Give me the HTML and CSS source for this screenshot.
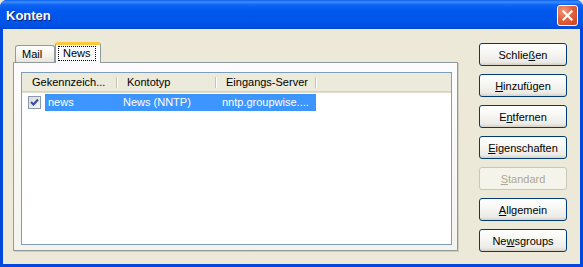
FILE: index.html
```html
<!DOCTYPE html>
<html lang="de">
<head>
  <meta charset="UTF-8" />
  <title>Konten</title>
  <link rel="stylesheet" href="styles.css">
</head>
<body>
  <div class="window">
    <!-- Title bar -->
    <div class="titlebar">
      <span class="title">Konten</span>
      <button class="close-btn">
        <svg width="11" height="11" viewBox="0 0 11 11">
          <path d="M1.5 1.5 L9.5 9.5 M9.5 1.5 L1.5 9.5" stroke="#fff" stroke-width="2.2" stroke-linecap="square"/>
        </svg>
      </button>
    </div>

    <div class="client">
      <!-- Left: tabs + list -->
      <div class="tab-area">
        <div class="tabs">
          <div class="tab">Mail</div>
          <div class="tab active"><span class="focus">News</span></div>
        </div>
        <div class="panel">
          <div class="listview">
            <div class="lv-header">
              <div class="col col-1">Gekennzeich...</div>
              <div class="col col-2">Kontotyp</div>
              <div class="col col-3">Eingangs-Server</div>
            </div>
            <div class="lv-row">
              <span class="check">
                <svg width="9" height="9" viewBox="0 0 9 9">
                  <path d="M1 4 L3.5 6.5 L8 1.5" fill="none" stroke="#3048a8" stroke-width="2"/>
                </svg>
              </span>
              <div class="selected">
                <span class="cell cell-1">news</span>
                <span class="cell cell-2">News (NNTP)</span>
                <span class="cell cell-3">nntp.groupwise....</span>
              </div>
            </div>
          </div>
        </div>
      </div>

      <!-- Right: buttons -->
      <div class="buttons">
        <button class="btn">Schlie<u>ß</u>en</button>
        <button class="btn"><u>H</u>inzufügen</button>
        <button class="btn">E<u>n</u>tfernen</button>
        <button class="btn"><u>E</u>igenschaften</button>
        <button class="btn" disabled><u>S</u>tandard</button>
        <button class="btn"><u>A</u>llgemein</button>
        <button class="btn">Ne<u>w</u>sgroups</button>
      </div>
    </div>
  </div>
</body>
</html>
```

FILE: styles.css
```css
/* ==========================
   PAGE & WINDOW
=========================== */
body {
  margin: 0;
  padding: 0;
  font-family: 'Liberation Sans', Arial, sans-serif;
  font-size: 11px;
  color: #000;
  background: #ECE9D8;
}

.window {
  width: 583px;
  height: 267px;
  display: flex;
  flex-direction: column;
  background: #0049DC;
  border-radius: 7px 7px 0 0;
  overflow: hidden;
  box-sizing: border-box;
}

/* ==========================
   TITLE BAR
=========================== */
.titlebar {
  height: 29px;
  flex: none;
  display: flex;
  align-items: center;
  justify-content: space-between;
  padding: 0 5px 0 6px;
  background: linear-gradient(#0A5FEA 0%, #3D8DFF 7%, #0F66F5 16%, #0058EE 35%, #0055EA 70%, #0052E3 90%, #0048D6 100%);
}

.title {
  color: #fff;
  font-weight: bold;
  font-size: 13px;
  font-family: 'Liberation Sans', Arial, sans-serif;
  text-shadow: 1px 1px 0 #0A1F77;
  margin-top: 1px;
}

.close-btn {
  width: 21px;
  height: 21px;
  padding: 0;
  border: 1px solid #fff;
  border-radius: 3px;
  background: radial-gradient(circle at 30% 25%, #EE9A7C 0%, #E2623F 45%, #C9431F 100%);
  display: flex;
  align-items: center;
  justify-content: center;
  margin-top: 2px;
}

/* ==========================
   CLIENT AREA
=========================== */
.client {
  flex: 1;
  margin: 0 3px 3px 3px;
  background: #ECE9D8;
  display: flex;
}

.tab-area {
  padding: 13px 0 0 10px;
  display: flex;
  flex-direction: column;
}

.tabs {
  display: flex;
  align-items: flex-end;
  padding-left: 2px;
  height: 20px;
  position: relative;
  z-index: 1;
}

.tab {
  height: 17px;
  box-sizing: border-box;
  padding: 2px 0 0 6px;
  width: 40px;
  border: 1px solid #919B9C;
  border-bottom: none;
  border-radius: 3px 3px 0 0;
  background: linear-gradient(#FFFFFF, #F3F2EC 60%, #E8E6DB);
}

.tab.active {
  height: 21px;
  width: 46px;
  margin-bottom: -1px;
  padding: 1px 0 0 2px;
  border-top: 3px solid #FFC83C;
  border-radius: 3px 3px 0 0;
  background: #FCFCFE;
}

.focus {
  display: inline-block;
  border: 1px dotted #000;
  padding: 0 4px;
  line-height: 13px;
}

.panel {
  width: 445px;
  height: 189px;
  box-sizing: border-box;
  border: 1px solid #919B9C;
  background: linear-gradient(#FCFCFE, #F4F3EE);
  box-shadow: 1px 1px 0 #D0CEBF;
  padding: 9px 0 0 7px;
}

.listview {
  width: 431px;
  height: 173px;
  box-sizing: border-box;
  border: 1px solid #7F9DB9;
  background: #fff;
}

/* ==========================
   LIST HEADER & ROWS
=========================== */
.lv-header {
  display: flex;
  height: 18px;
  background: #EBEADB;
  border-bottom: 1px solid #D6D2C2;
  box-shadow: 0 1px 0 #E2DECD;
}

.col {
  box-sizing: border-box;
  line-height: 18px;
  position: relative;
}

.col::after {
  content: '';
  position: absolute;
  right: 0;
  top: 4px;
  height: 11px;
  width: 1px;
  background: #C7C5B2;
  box-shadow: 1px 0 0 #fff;
}

.col-1 { width: 95px; padding-left: 10px; }
.col-2 { width: 99px; padding-left: 10px; }
.col-3 { width: 100px; padding-left: 10px; }

.lv-row {
  display: flex;
  align-items: center;
  height: 17px;
  margin-top: 2px;
}

.check {
  width: 13px;
  height: 13px;
  box-sizing: border-box;
  margin-left: 6px;
  border: 1px solid #8A99AE;
  background: linear-gradient(135deg, #DCDBD5, #F4F4F0);
  display: flex;
  align-items: center;
  justify-content: center;
}

.selected {
  display: flex;
  height: 17px;
  margin-left: 4px;
  background: #3D95FF;
  color: #fff;
  line-height: 17px;
}

.cell-1 { width: 72px; padding-left: 3px; box-sizing: border-box; }
.cell-2 { width: 99px; padding-left: 6px; box-sizing: border-box; }
.cell-3 { width: 100px; padding-left: 6px; box-sizing: border-box; }

/* ==========================
   BUTTONS
=========================== */
.buttons {
  display: flex;
  flex-direction: column;
  gap: 8px;
  padding: 14px 0 0 21px;
}

.btn {
  width: 88px;
  height: 23px;
  padding: 0;
  font-family: 'Liberation Sans', Arial, sans-serif;
  font-size: 11px;
  color: #000;
  border: 1px solid #003C74;
  border-radius: 3px;
  background: linear-gradient(#FFFFFF 0%, #F7F7F4 40%, #ECEBE6 85%, #D6D0C5 100%);
}

.btn:disabled {
  color: #ACA899;
  border-color: #C9C7BA;
  background: #F5F4EA;
}
```
